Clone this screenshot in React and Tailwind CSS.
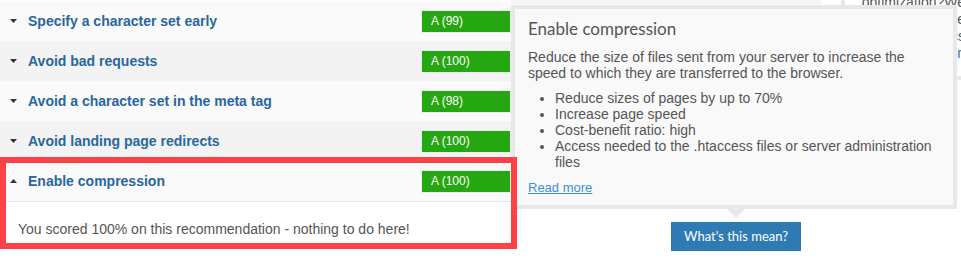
import React from "react";

const rows = [
  { title: "Specify a character set early", score: "A (99)", bg: "bg-[#fafafa]" },
  { title: "Avoid bad requests", score: "A (100)", bg: "bg-[#f3f3f3]" },
  { title: "Avoid a character set in the meta tag", score: "A (98)", bg: "bg-[#fafafa]" },
  { title: "Avoid landing page redirects", score: "A (100)", bg: "bg-[#f3f3f3]" },
];

const Caret = ({ up }) => (
  <svg width="7" height="4" viewBox="0 0 7 4" className="shrink-0">
    {up ? <polygon points="0,4 7,4 3.5,0" fill="#333" /> : <polygon points="0,0 7,0 3.5,4" fill="#333" />}
  </svg>
);

const Row = ({ title, score, bg, up }) => {
  return (
    <div className={`flex items-center h-10 pl-[10px] ${bg}`}>
      <Caret up={up} />
      <span className="ml-[11px] text-[14px] font-bold text-[#28679e]">{title}</span>
      <div className="ml-auto w-[90px] h-[23px] flex items-center pl-[9px] bg-[#25a712] border border-[#ececec] text-white text-[12px]">
        {score}
      </div>
    </div>
  );
};

const App = () => {
  return (
    <div className="relative w-[961px] h-[260px] overflow-hidden bg-white flex font-['Liberation_Sans',Arial,sans-serif]">
      {/* results list */}
      <section className="w-[511px] shrink-0 pt-px">
        {rows.map((r) => (
          <Row key={r.title} {...r} />
        ))}
        <Row title="Enable compression" score="A (100)" bg="bg-[#fafafa]" up />
        <div className="border-t border-[#e6e6e6] pl-[18px] pt-[17px] text-[14px] leading-5 text-[#555]">
          You scored 100% on this recommendation - nothing to do here!
        </div>
      </section>

      {/* right column with tooltip + button */}
      <section className="relative flex-1 flex flex-col">
        <div className="flex h-[222px]">
          <div className="w-[310px] h-[4px] bg-[#f5f5f5]" />
          <div className="ml-[20px] w-[124px] h-[80px] shrink-0 bg-white border-l-4 border-b-4 border-[#e8e8e8] text-[14px] leading-[17px] text-[#555] text-right">
            <div className="-mt-[6px]">optimization?We</div>
            <div>have a whole page</div>
            <div>on these metrics</div>
            <div className="text-[#3c6fae]">in our tutori</div>
          </div>
        </div>
        <button className="ml-[160px] w-[130px] h-[29px] bg-[#2e7bb4] text-white text-[13px] font-['Lato',sans-serif]">
          What's this mean?
        </button>

        {/* popover */}
        <div className="absolute left-0 top-[5px] z-10 w-[446px] h-[204px] border-4 border-[#e8e8e8] bg-[#f9f9f9] pl-[13px] pr-[13px] pt-[10px] text-[#555]">
          <h3 className="text-[17px] leading-5 font-['Lato',sans-serif]">Enable compression</h3>
          <p className="mt-[10px] text-[14px] leading-4">
            Reduce the size of files sent from your server to increase the speed to which they are transferred to the browser.
          </p>
          <ul className="mt-[9px] ml-[27px] list-disc text-[14px] leading-4">
            <li>Reduce sizes of pages by up to 70%</li>
            <li>Increase page speed</li>
            <li>Cost-benefit ratio: high</li>
            <li>Access needed to the .htaccess files or server administration files</li>
          </ul>
          <a href="#" className="block mt-[10px] text-[13px] leading-4 text-[#3f8fd8] underline">
            Read more
          </a>
        </div>
        <div className="absolute left-[216px] top-[209px] z-10 w-0 h-0 border-x-[9px] border-x-transparent border-t-[9px] border-t-[#e8e8e8]" />
      </section>

      {/* annotation frame */}
      <div className="absolute left-0 top-[157px] z-20 w-[517px] h-[92px] border-[6px] border-[#fb4246] pointer-events-none" />
    </div>
  );
};

export default App;
